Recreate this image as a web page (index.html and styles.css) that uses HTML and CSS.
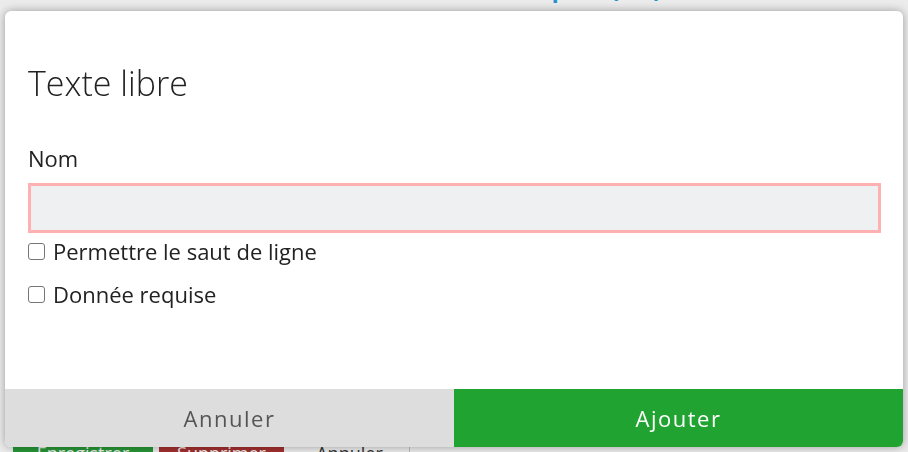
FILE: index.html
```
<!DOCTYPE html>
<html lang="fr">
<head>
<meta charset="utf-8">
<title>Texte libre</title>
<link rel="stylesheet" href="styles.css">
</head>
<body>
<div class="page">
  <h1 class="page-title">Groupes (12)</h1>
  <div class="page-spacer"></div>
  <div class="page-actions">
    <span class="pbtn pbtn-save">Enregistrer</span>
    <span class="pbtn pbtn-delete">Supprimer</span>
    <span class="pbtn pbtn-cancel">Annuler</span>
  </div>
</div>
<div class="overlay"></div>
<div class="modal">
  <div class="modal-body">
    <h2 class="modal-title">Texte libre</h2>
    <label class="field-label" for="nom">Nom</label>
    <input class="field-input" id="nom" type="text">
    <label class="check-row"><input type="checkbox" class="check"><span>Permettre le saut de ligne</span></label>
    <label class="check-row check-row-second"><input type="checkbox" class="check"><span>Donnée requise</span></label>
  </div>
  <div class="modal-footer">
    <button class="mbtn mbtn-cancel">Annuler</button>
    <button class="mbtn mbtn-add">Ajouter</button>
  </div>
</div>
</body>
</html>
```

FILE: styles.css
```
* { box-sizing: border-box; }
html, body { margin: 0; padding: 0; }
body {
  width: 908px;
  height: 452px;
  overflow: hidden;
  background: #ffffff;
  font-family: "Open Sans", "Liberation Sans", sans-serif;
  color: #222;
}
.page {
  height: 452px;
  display: flex;
  flex-direction: column;
}
.page-title {
  margin: -35px 0 0 479px;
  font-size: 30px;
  line-height: 40px;
  font-weight: 600;
  color: #2a9fdc;
}
.page-spacer { flex: 1; }
.page-actions {
  display: flex;
  align-items: stretch;
  height: 32px;
  margin-bottom: -17px;
  padding-left: 13px;
  gap: 6px;
  font-size: 18px;
}
.pbtn {
  display: flex;
  align-items: center;
  justify-content: center;
  padding: 0 16px;
}
.pbtn-save { background: #2aa33a; color: #fff; width: 140px; }
.pbtn-delete { background: #b03333; color: #fff; width: 125px; }
.pbtn-cancel { color: #333; width: 120px; border-right: 1px solid #ccc; }
.overlay {
  position: fixed;
  inset: 0;
  background: rgba(0, 0, 0, 0.08);
}
.modal {
  position: fixed;
  left: 5px;
  top: 11px;
  width: 898px;
  height: 436px;
  background: #fff;
  border-radius: 6px;
  box-shadow: 0 0 10px rgba(0, 0, 0, 0.35);
  overflow: hidden;
  display: flex;
  flex-direction: column;
}
.modal-body {
  flex: 1;
  padding: 51px 22px 0 23px;
  display: flex;
  flex-direction: column;
  align-items: flex-start;
}
.modal-title {
  margin: 0;
  font-size: 34px;
  line-height: 42px;
  font-weight: 300;
  color: #222;
}
.field-label {
  margin-top: 39px;
  font-size: 22px;
  line-height: 30px;
  color: #222;
}
.field-input {
  margin-top: 10px;
  width: 853px;
  height: 50px;
  border: 3px solid #ffb0b0;
  background: #eff0f2;
  font: inherit;
  outline: none;
}
.check-row {
  margin-top: 3px;
  display: flex;
  align-items: center;
  font-size: 22px;
  line-height: 30px;
  color: #222;
}
.check-row-second { margin-top: 13px; }
.check {
  appearance: none;
  -webkit-appearance: none;
  width: 17px;
  height: 17px;
  margin: 0 8px 0 0;
  border: 1px solid #767676;
  border-radius: 3px;
  background: #fff;
}
.modal-footer {
  height: 58px;
  display: flex;
}
.mbtn {
  flex: 1;
  border: none;
  margin: 0;
  font-family: "Open Sans", "Liberation Sans", sans-serif;
  font-size: 22px;
  letter-spacing: 1.5px;
  display: flex;
  align-items: center;
  justify-content: center;
}
.mbtn-cancel { background: #dddddd; color: #555; }
.mbtn-add { background: #21a331; color: #fff; }
```
